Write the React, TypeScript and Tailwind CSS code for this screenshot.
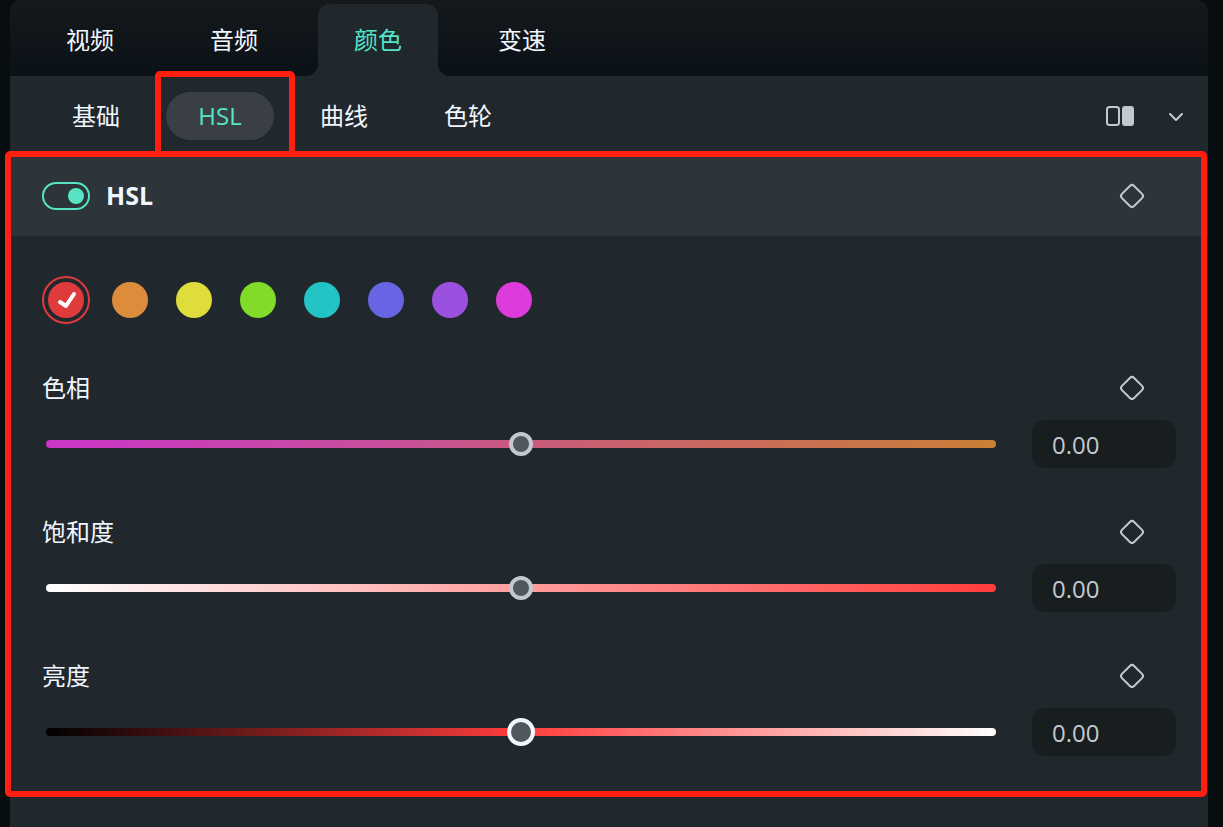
import { useState } from "react";
import clsx from "clsx";

const tabs = ["视频", "音频", "颜色", "变速"];
const subTabs = ["基础", "HSL", "曲线", "色轮"];

const swatches = [
  { id: "red", label: "红色", fill: "bg-[#df3a3c]" },
  { id: "orange", label: "橙色", fill: "bg-[#dd8c3c]" },
  { id: "yellow", label: "黄色", fill: "bg-[#dfdd3b]" },
  { id: "green", label: "绿色", fill: "bg-[#82db28]" },
  { id: "cyan", label: "青色", fill: "bg-[#22c4c6]" },
  { id: "blue", label: "蓝色", fill: "bg-[#6765e3]" },
  { id: "purple", label: "紫色", fill: "bg-[#9a51e0]" },
  { id: "magenta", label: "洋红", fill: "bg-[#dd3bdc]" },
];

const sliders = [
  {
    id: "hue",
    label: "色相",
    track: "[&::-webkit-slider-runnable-track]:bg-linear-[90deg,#c936c9,#c95295_40%,#c95a7c_50%,#c98036]",
    thumb:
      "[&::-webkit-slider-thumb]:size-6 [&::-webkit-slider-thumb]:-mt-2 [&::-webkit-slider-thumb]:border-[#c3c9d0]",
  },
  {
    id: "saturation",
    label: "饱和度",
    track: "[&::-webkit-slider-runnable-track]:bg-linear-[90deg,#ffffff,#ff3c3c]",
    thumb:
      "[&::-webkit-slider-thumb]:size-6 [&::-webkit-slider-thumb]:-mt-2 [&::-webkit-slider-thumb]:border-[#c3c9d0]",
  },
  {
    id: "lightness",
    label: "亮度",
    track: "[&::-webkit-slider-runnable-track]:bg-linear-[90deg,#000000,#ff3c3c,#ffffff]",
    thumb:
      "[&::-webkit-slider-thumb]:size-7 [&::-webkit-slider-thumb]:-mt-[10px] [&::-webkit-slider-thumb]:border-[#f2f7ff]",
  },
];

const KeyframeButton = ({ label }: { label: string }) => (
  <button aria-label={label} className="flex size-10 items-center justify-center text-[#c3c9d0]">
    <svg width="28" height="28" viewBox="0 0 28 28" fill="none" stroke="currentColor" strokeWidth="2">
      <rect x="5.4" y="5.4" width="17.2" height="17.2" rx="3" transform="rotate(45 14 14)" />
    </svg>
  </button>
);

const App = () => {
  const [tab, setTab] = useState("颜色");
  const [subTab, setSubTab] = useState("HSL");
  const [enabled, setEnabled] = useState(true);
  const [color, setColor] = useState("red");
  const [values, setValues] = useState<Record<string, number>>({ hue: 0, saturation: 0, lightness: 0 });

  return (
    <div className="min-h-screen bg-[#080d0f] pr-[15px] pl-[10px] font-['Open_Sans','Noto_Sans_CJK_SC',sans-serif] text-2xl text-[#f2f7ff]">
      <main className="min-h-screen rounded-t-xl bg-[#21282d]">
        <nav className="flex h-[76px] gap-6 rounded-t-xl bg-linear-to-b from-[#15191c] to-[#0a1117] px-5 pt-1">
          {tabs.map((t) => (
            <button
              key={t}
              onClick={() => setTab(t)}
              className={clsx(
                "relative w-[120px] rounded-t-xl",
                tab === t &&
                  "bg-[#21282d] text-[#55e5c5] before:absolute before:bottom-0 before:-left-3 before:size-3 before:bg-[radial-gradient(circle_at_0_0,transparent_12px,#21282d_12px)] after:absolute after:-right-3 after:bottom-0 after:size-3 after:bg-[radial-gradient(circle_at_100%_0,transparent_12px,#21282d_12px)]"
              )}
            >
              {t}
            </button>
          ))}
        </nav>

        <div className="flex h-20 items-center justify-between pr-[22px] pl-8">
          <div className="flex gap-4">
            {subTabs.map((t) => (
              <button
                key={t}
                onClick={() => setSubTab(t)}
                className={clsx("relative h-12 w-[108px] rounded-full", subTab === t && "bg-[#393f45] text-[#55e5c5]")}
              >
                {t}
                {t === "HSL" && (
                  <span className="pointer-events-none absolute -top-[21px] -right-[21px] -bottom-[17px] -left-[11px] rounded-t-[5px] border-[6px] border-[#ff1e10]" />
                )}
              </button>
            ))}
          </div>
          <div className="flex items-center gap-[30px] text-[#c3c9d0]">
            <button aria-label="对比">
              <svg width="32" height="24" viewBox="0 0 32 24" fill="none">
                <rect x="3" y="3" width="12" height="18" rx="2.5" stroke="currentColor" strokeWidth="2" />
                <rect x="18" y="2" width="12" height="20" rx="3" fill="currentColor" />
              </svg>
            </button>
            <button aria-label="展开">
              <svg
                width="20"
                height="24"
                viewBox="0 0 20 24"
                fill="none"
                stroke="currentColor"
                strokeWidth="2"
                strokeLinecap="round"
                strokeLinejoin="round"
              >
                <path d="M4 10l6 6 6-6" />
              </svg>
            </button>
          </div>
        </div>

        <section className="relative">
          <header className="flex h-20 items-center justify-between bg-[#2d343a] pr-14 pl-8">
            <label className="flex items-center gap-4 text-[25px] font-bold">
              <input
                type="checkbox"
                checked={enabled}
                onChange={(e) => setEnabled(e.target.checked)}
                className="flex h-7 w-12 appearance-none items-center rounded-full border-2 border-[#c3c9d0] px-1 before:size-4 before:rounded-full before:bg-[#c3c9d0] checked:justify-end checked:border-[#55e5c5] checked:before:bg-[#55e5c5]"
              />
              HSL
            </label>
            <KeyframeButton label="HSL 关键帧" />
          </header>

          <div className="flex flex-col gap-10 px-8 py-10">
            <div role="radiogroup" aria-label="颜色" className="flex gap-4">
              {swatches.map((s) => (
                <label
                  key={s.id}
                  className={clsx(
                    "relative flex size-12 items-center justify-center rounded-full",
                    color === s.id && "border-2 border-[#df3a3c]"
                  )}
                >
                  <input
                    type="radio"
                    name="color"
                    aria-label={s.label}
                    checked={color === s.id}
                    onChange={() => setColor(s.id)}
                    className={clsx("size-9 appearance-none rounded-full", s.fill)}
                  />
                  {color === s.id && (
                    <svg
                      className="pointer-events-none absolute"
                      width="24"
                      height="24"
                      viewBox="0 0 24 24"
                      fill="none"
                      stroke="#fff"
                      strokeWidth="4"
                      strokeLinecap="round"
                      strokeLinejoin="round"
                    >
                      <path d="M6 14l6 4 8-12" />
                    </svg>
                  )}
                </label>
              ))}
            </div>

            {sliders.map((s) => (
              <div key={s.id} className="flex flex-col gap-2">
                <div className="flex h-12 items-center justify-between pr-6">
                  <label htmlFor={s.id}>{s.label}</label>
                  <KeyframeButton label={`${s.label} 关键帧`} />
                </div>
                <div className="flex items-center gap-9 pl-1">
                  <input
                    id={s.id}
                    type="range"
                    min={-100}
                    max={100}
                    value={values[s.id]}
                    onChange={(e) => setValues({ ...values, [s.id]: Number(e.target.value) })}
                    className={clsx(
                      "h-7 min-w-0 flex-1 appearance-none bg-transparent",
                      "[&::-webkit-slider-runnable-track]:h-2 [&::-webkit-slider-runnable-track]:rounded-full",
                      "[&::-webkit-slider-thumb]:appearance-none [&::-webkit-slider-thumb]:rounded-full [&::-webkit-slider-thumb]:border-4 [&::-webkit-slider-thumb]:bg-[#51575e]",
                      s.track,
                      s.thumb
                    )}
                  />
                  <input
                    type="text"
                    aria-label={`${s.label} 数值`}
                    value={values[s.id].toFixed(2)}
                    onChange={(e) => setValues({ ...values, [s.id]: Number(e.target.value) || 0 })}
                    className="h-12 w-36 rounded-xl bg-[#181d20] px-5 text-[#c3c9d0]"
                  />
                </div>
              </div>
            ))}
          </div>

          <div className="pointer-events-none absolute -top-[5px] right-px -bottom-px -left-[5px] rounded-[5px] border-[6px] border-[#ff1e10]" />
        </section>
      </main>
    </div>
  );
};

export default App;
